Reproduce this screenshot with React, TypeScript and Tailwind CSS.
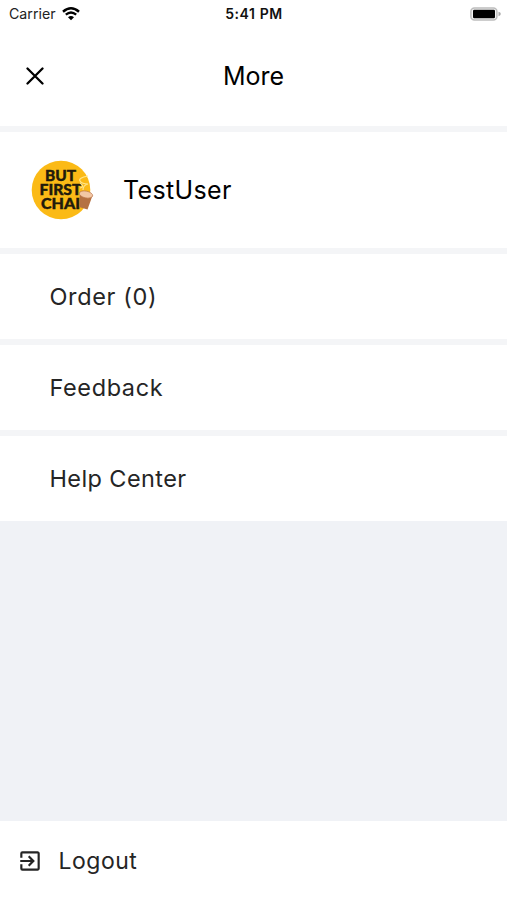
import { MdExitToApp } from 'react-icons/md'

const menuItems = [
  { label: 'Order (0)', className: 'tracking-[0.65px]' },
  { label: 'Feedback', className: 'tracking-[0.6px]' },
  { label: 'Help Center', className: 'tracking-[0.4px]' },
]

function WifiIcon() {
  return (
    <svg width="18" height="14" viewBox="0 0 18 14" fill="none">
      <path d="M1 4.7Q9-2.1 17 4.7" stroke="#000" strokeWidth="2.5" />
      <path d="M3.8 7.7Q9 3.3 14.2 7.7" stroke="#000" strokeWidth="2.3" />
      <path d="M6 10.3Q9 7.7 12 10.3L9 13.3Z" fill="#000" />
    </svg>
  )
}

function BatteryIcon() {
  return (
    <svg width="31" height="14" viewBox="0 0 31 14">
      <rect
        x="0.9"
        y="0.9"
        width="26"
        height="12.2"
        rx="3.5"
        fill="#f4f4f4"
        stroke="#bdbdbd"
        strokeWidth="1.5"
      />
      <rect x="3" y="2.8" width="22" height="8.4" rx="1.2" fill="#000" />
      <path d="M28.5 4.8Q30.8 5.4 30.8 7T28.5 9.2Z" fill="#aaa" />
    </svg>
  )
}

function StatusBar() {
  return (
    <div className="grid h-7 grid-cols-3 items-center pr-1.5 pl-[9px] text-[#222]">
      <div className="flex items-center gap-1.5">
        <span className="text-[14.2px]">Carrier</span>
        <WifiIcon />
      </div>
      <span className="pr-0.5 pb-0.5 text-center text-[14px] font-semibold tracking-[0.6px] text-[#111]">
        5:41 PM
      </span>
      <div className="flex justify-end">
        <BatteryIcon />
      </div>
    </div>
  )
}

function Header() {
  return (
    <header className="grid h-[98px] grid-cols-3 items-center px-[26px] pb-0.5 text-black">
      <svg width="18" height="18" viewBox="0 0 18 18" aria-label="Close">
        <path
          d="M1.5 1.5l15 15m0-15l-15 15"
          stroke="#000"
          strokeWidth="2.3"
          strokeLinecap="round"
        />
      </svg>
      <h1 className="pt-0.5 text-center text-[25px]">More</h1>
    </header>
  )
}

function Avatar() {
  return (
    <svg width="64" height="60" viewBox="0 0 64 60" className="shrink-0">
      <circle cx="30" cy="30" r="29.3" fill="#fbba16" />
      <g
        fill="#211b0c"
        stroke="#211b0c"
        strokeWidth="0.4"
        fontFamily="Lato, sans-serif"
        fontWeight="900"
        fontSize="15"
      >
        <text x="14" y="21" textLength="31" lengthAdjust="spacingAndGlyphs">
          BUT
        </text>
        <text x="8.5" y="35" textLength="42" lengthAdjust="spacingAndGlyphs">
          FIRST
        </text>
        <text x="10" y="49.3" textLength="39" lengthAdjust="spacingAndGlyphs">
          CHAI
        </text>
      </g>
      <path
        d="M57 16Q47 18 49 21T57 24Q52 25 52 30M49 23Q54 27 49 28"
        fill="none"
        stroke="#ffe58c"
        strokeWidth="1.2"
      />
      <path d="M48.8 34.5L61 37 56.5 49.5 48 47Z" fill="#b57142" />
      <ellipse
        cx="55"
        cy="34.5"
        rx="6.8"
        ry="3.4"
        transform="rotate(12 55 34.5)"
        fill="#f2c7a5"
        stroke="#bd7950"
        strokeWidth="0.7"
      />
    </svg>
  )
}

function Profile() {
  return (
    <section className="flex h-[116px] items-center gap-7 bg-white pl-[31px] text-[25px] text-black">
      <Avatar />
      <span className="pt-px tracking-[0.35px]">TestUser</span>
    </section>
  )
}

export default function App() {
  return (
    <div className="flex h-screen flex-col bg-[#f0f2f6] font-['Inter',sans-serif] text-[#252525]">
      <div className="bg-white">
        <StatusBar />
        <Header />
      </div>
      <main className="flex flex-col gap-1.5 bg-[#f4f5f7] pt-1.5">
        <Profile />
        {menuItems.map(({ label, className }) => (
          <button
            key={label}
            className="flex h-[85px] items-center bg-white pl-[49.5px] text-[23.5px]"
          >
            <span className={className}>{label}</span>
          </button>
        ))}
      </main>
      <button className="mt-auto flex h-[79px] items-center gap-[15.5px] bg-white pl-[17px] text-[23px]">
        <MdExitToApp size={26} />
        <span className="pt-0.5 tracking-[0.5px]">Logout</span>
      </button>
    </div>
  )
}
